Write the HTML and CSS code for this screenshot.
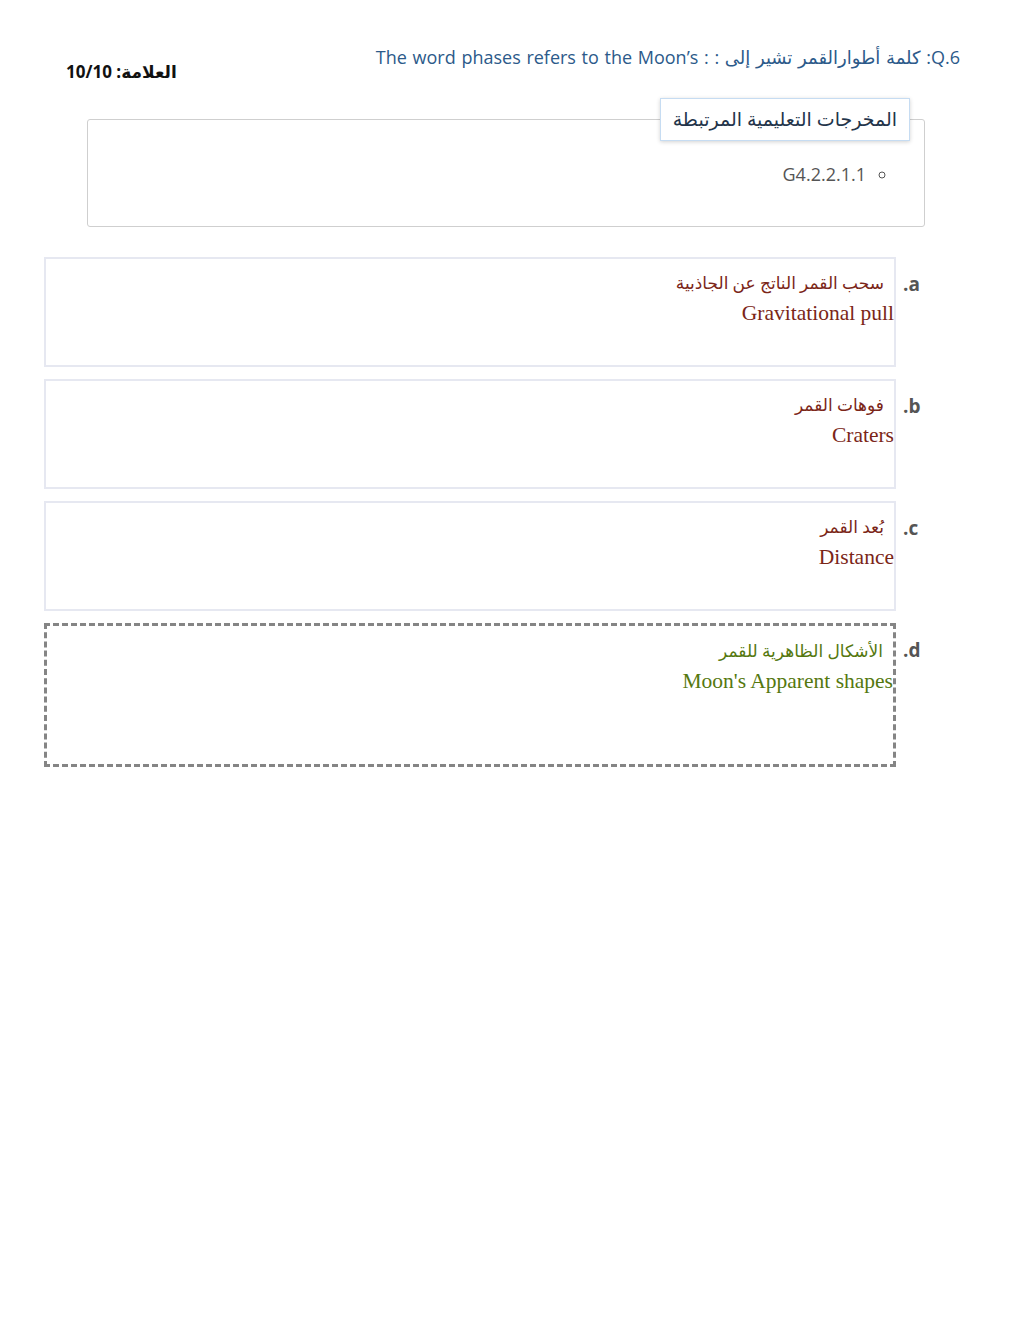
FILE: index.html
```html
<!DOCTYPE html>
<html lang="ar" dir="rtl">
<head>
    <meta charset="UTF-8">
    <meta name="viewport" content="width=device-width, initial-scale=1.0">
    <title>Q.6</title>

    <link rel="stylesheet" href="styles.css">
</head>
<body>

    <div class="Quiz">
        <div class="Quiz__head">
            <div class="Quiz__title">Q.6: كلمة أطوارالقمر تشير إلى : : The word phases refers to the Moon’s</div>
            <div class="Quiz__score">العلامة: 10/10</div>
        </div>

        <fieldset class="Outcomes">
            <legend>المخرجات التعليمية المرتبطة</legend>
            <ul>
                <li>G4.2.2.1.1</li>
            </ul>
        </fieldset>

        <!-- варианты ответа -->
        <div class="Quiz__answers">
            <div class="Answer">
                <span class="Answer__label">a.</span>
                <div class="Answer__box">
                    <p class="Answer__ar">سحب القمر الناتج عن الجاذبية</p>
                    <p class="Answer__en" dir="ltr">Gravitational pull</p>
                </div>
            </div>
            <div class="Answer">
                <span class="Answer__label">b.</span>
                <div class="Answer__box">
                    <p class="Answer__ar">فوهات القمر</p>
                    <p class="Answer__en" dir="ltr">Craters</p>
                </div>
            </div>
            <div class="Answer">
                <span class="Answer__label">c.</span>
                <div class="Answer__box">
                    <p class="Answer__ar">بُعد القمر</p>
                    <p class="Answer__en" dir="ltr">Distance</p>
                </div>
            </div>
            <div class="Answer Answer--correct">
                <span class="Answer__label">d.</span>
                <div class="Answer__box">
                    <p class="Answer__ar">الأشكال الظاهرية للقمر</p>
                    <p class="Answer__en" dir="ltr">Moon's Apparent shapes</p>
                </div>
            </div>
        </div>
    </div>

</body>
</html>
```

FILE: styles.css
```css
* {
    box-sizing: border-box;
}

body {
    margin: 0;
    font-family: 'Open Sans', 'DejaVu Sans', sans-serif;
    background: #fff;
}

.Quiz {
    padding: 44px 58px 0 44px;
}

.Quiz__head {
    display: flex;
    justify-content: space-between;
    align-items: flex-start;
}

.Quiz__title {
    color: #2c5a8a;
    font-size: 18px;
    line-height: 26px;
    word-spacing: 1px;
}

.Quiz__score {
    margin: 16px 0 0 22px;
    font-size: 17px;
    font-weight: bold;
    color: #111;
}

.Outcomes {
    margin: 15px 35px 0 43px;
    padding: 0 14px 38px;
    border: 1px solid #cfcfcf;
    border-radius: 3px;
}

.Outcomes legend {
    margin-bottom: 7px;
    padding: 7px 12px 8px;
    background: #fff;
    border: 1px solid #c6dcf2;
    box-shadow: 0 1px 4px rgba(0, 0, 0, .18);
    font-size: 19px;
    line-height: 26px;
    color: #23344a;
}

.Outcomes ul {
    margin: 12px 0 0;
    padding: 0 44px 0 0;
    list-style: circle;
    color: #555;
    font-size: 18px;
    line-height: 28px;
}

.Quiz__answers {
    display: flex;
    flex-direction: column;
    gap: 12px;
    margin-top: 30px;
}

.Answer {
    display: flex;
    align-items: flex-start;
}

.Answer__label {
    flex: none;
    width: 64px;
    padding: 14px 0 0 7px;
    text-align: left;
    font-size: 19px;
    font-weight: bold;
    color: #555;
}

.Answer__box {
    flex: 1;
    min-height: 110px;
    padding: 11px 0 0;
    border: 2px solid #e6e8f1;
    font-family: 'Liberation Serif', 'DejaVu Sans', serif;
    color: #7b2618;
}

.Answer p {
    margin: 0;
}

.Answer__ar {
    padding-right: 10px;
    font-size: 17px;
    line-height: 28px;
}

.Answer__en {
    text-align: right;
    font-size: 21.5px;
    line-height: 30px;
}

.Answer--correct .Answer__box {
    min-height: 144px;
    border: 3px dashed #858585;
    color: #55780f;
    padding-top: 12px;
}
```
